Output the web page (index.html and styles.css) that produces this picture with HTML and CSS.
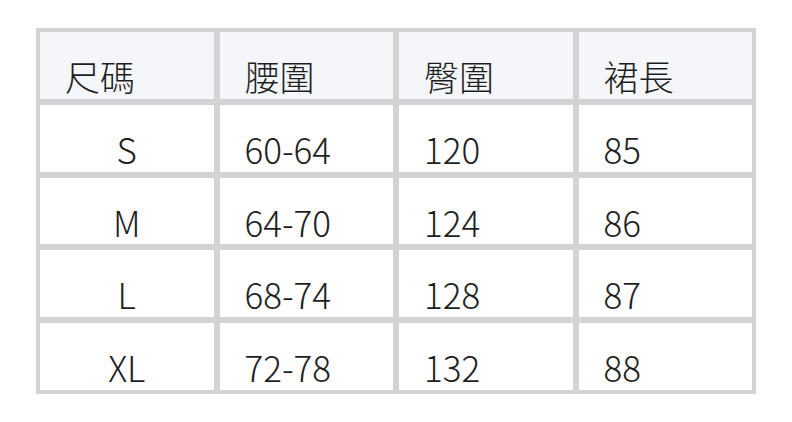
FILE: index.html
```html
<!DOCTYPE html>
<html lang="zh-Hant">
<head>
<meta charset="utf-8">
<link rel="stylesheet" href="styles.css">
</head>
<body>
<div class="table">
  <div class="cell head">尺碼</div>
  <div class="cell head">腰圍</div>
  <div class="cell head">臀圍</div>
  <div class="cell head">裙長</div>

  <div class="cell center">S</div>
  <div class="cell">60-64</div>
  <div class="cell">120</div>
  <div class="cell">85</div>

  <div class="cell center">M</div>
  <div class="cell">64-70</div>
  <div class="cell">124</div>
  <div class="cell">86</div>

  <div class="cell center">L</div>
  <div class="cell">68-74</div>
  <div class="cell">128</div>
  <div class="cell">87</div>

  <div class="cell center">XL</div>
  <div class="cell">72-78</div>
  <div class="cell">132</div>
  <div class="cell">88</div>
</div>
</body>
</html>
```
FILE: styles.css
```css
html, body {
  margin: 0;
  padding: 0;
  background: #ffffff;
}
body {
  padding: 28px 36px;
  font-family: "Noto Sans CJK TC", "Noto Sans", sans-serif;
  color: #1e1e1e;
}
.table {
  width: 720px;
  height: 366px;
  box-sizing: border-box;
  background: #d3d3d3;
  padding: 4px;
  display: grid;
  grid-template-columns: repeat(4, 1fr);
  grid-template-rows: repeat(5, 1fr);
  gap: 6px;
}
.cell {
  background: #ffffff;
  font-size: 35px;
  font-weight: 300;
  line-height: 35px;
  padding: 26px 0 0 25px;
  box-sizing: border-box;
  white-space: nowrap;
}
.head {
  background: #f5f6fa;
}
.center {
  text-align: center;
  padding-left: 0;
}
```
